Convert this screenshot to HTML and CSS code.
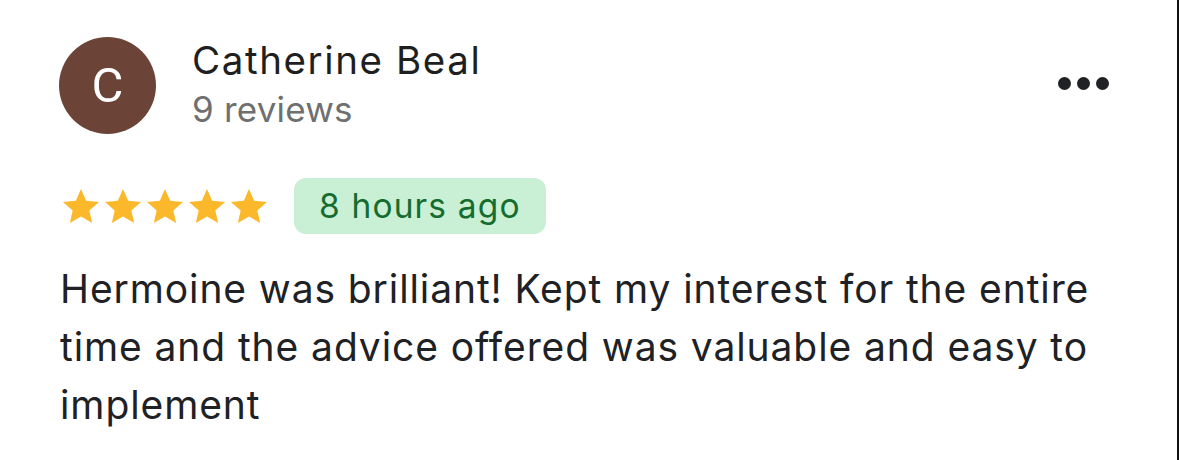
FILE: index.html
```html
<!DOCTYPE html>
<html lang="en">
<head>
<meta charset="utf-8">
<title>Review</title>
<link rel="stylesheet" href="styles.css">
</head>
<body>
<div class="frame">
  <div class="review">
    <div class="header">
      <div class="avatar">C</div>
      <div class="who">
        <div class="name">Catherine Beal</div>
        <div class="count">9 reviews</div>
      </div>
      <div class="more" aria-label="More options">
        <span class="dot"></span><span class="dot"></span><span class="dot"></span>
      </div>
    </div>
    <div class="meta">
      <div class="stars">
        <svg class="star" viewBox="0 0 24 24"><path d="M12 1.8l3.1 7.1 7.7.7-5.8 5.1 1.7 7.5L12 18.3l-6.7 3.9 1.7-7.5-5.8-5.1 7.7-.7z"/></svg>
        <svg class="star" viewBox="0 0 24 24"><path d="M12 1.8l3.1 7.1 7.7.7-5.8 5.1 1.7 7.5L12 18.3l-6.7 3.9 1.7-7.5-5.8-5.1 7.7-.7z"/></svg>
        <svg class="star" viewBox="0 0 24 24"><path d="M12 1.8l3.1 7.1 7.7.7-5.8 5.1 1.7 7.5L12 18.3l-6.7 3.9 1.7-7.5-5.8-5.1 7.7-.7z"/></svg>
        <svg class="star" viewBox="0 0 24 24"><path d="M12 1.8l3.1 7.1 7.7.7-5.8 5.1 1.7 7.5L12 18.3l-6.7 3.9 1.7-7.5-5.8-5.1 7.7-.7z"/></svg>
        <svg class="star" viewBox="0 0 24 24"><path d="M12 1.8l3.1 7.1 7.7.7-5.8 5.1 1.7 7.5L12 18.3l-6.7 3.9 1.7-7.5-5.8-5.1 7.7-.7z"/></svg>
      </div>
      <div class="badge">8 hours ago</div>
    </div>
    <p class="text">Hermoine was brilliant! Kept my interest for the entire time and the advice offered was valuable and easy to implement</p>
  </div>
</div>
</body>
</html>
```

FILE: styles.css
```css
html, body {
  margin: 0;
  padding: 0;
  background: #ffffff;
}

body {
  font-family: "Inter", "Roboto", "Liberation Sans", sans-serif;
  color: #202124;
}

.frame {
  width: 1179px;
  height: 460px;
  box-sizing: border-box;
  border-right: 2px solid #111111;
  overflow: hidden;
}

.review {
  padding: 36px 0 0 59px;
  width: 1050px;
}

.header {
  display: flex;
  align-items: center;
}

.avatar {
  width: 97px;
  height: 97px;
  border-radius: 50%;
  background: #6b4437;
  color: #ffffff;
  font-family: "Roboto", "Liberation Sans", sans-serif;
  font-size: 49px;
  display: flex;
  align-items: center;
  justify-content: center;
  flex-shrink: 0;
}

.who {
  margin-left: 36px;
  flex: 1;
  margin-top: 0;
}

.name {
  font-size: 38.5px;
  line-height: 48px;
  color: #1f1f1f;
  letter-spacing: 1.6px;
}

.count {
  font-size: 35px;
  line-height: 50px;
  color: #6f6f6f;
  letter-spacing: 0.2px;
}

.more {
  display: flex;
  gap: 6px;
  margin-right: 0;
  margin-top: -4px;
}

.dot {
  width: 13px;
  height: 13px;
  border-radius: 50%;
  background: #202124;
}

.meta {
  display: flex;
  align-items: center;
  margin-top: 44px;
}

.stars {
  display: flex;
  gap: 2px;
  margin-left: 2px;
}

.star {
  width: 40px;
  height: 40px;
  fill: #fbb82b;
}

.badge {
  margin-left: 25px;
  height: 56px;
  box-sizing: border-box;
  padding: 0 25px;
  border-radius: 12px;
  background: #c9efd4;
  color: #146c2e;
  font-size: 33.5px;
  display: flex;
  align-items: center;
  letter-spacing: 1.15px;
}

.text {
  margin: 26px 0 0 1px;
  font-size: 39px;
  line-height: 58px;
  color: #202124;
  width: 1050px;
  letter-spacing: 0.9px;
}
```
